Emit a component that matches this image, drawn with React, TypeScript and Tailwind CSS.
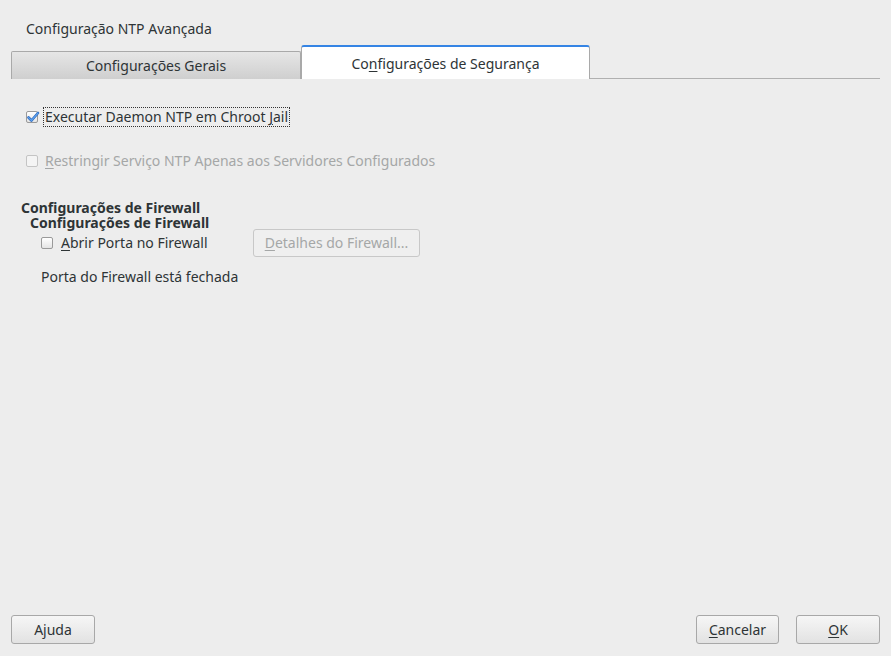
import React, { useState } from 'react';

function Check({ checked, disabled }: { checked?: boolean; disabled?: boolean }) {
  return (
    <span
      className={`relative inline-block w-[12px] h-[12px] shrink-0 rounded-[2px] border ${
        disabled ? 'border-[#c4c4c4] bg-[#f4f4f4]' : 'border-[#9a9a9a] bg-gradient-to-b from-[#ffffff] to-[#e4e4e4]'
      }`}
    >
      {checked && (
        <svg className="absolute left-[-1px] top-[-2px]" width="14" height="14" viewBox="0 0 14 14">
          <path d="M2.5 7.5 L5.5 10.5 L12 3" fill="none" stroke="#2a64b8" strokeWidth="2.6" strokeLinecap="round" strokeLinejoin="round" />
          <path d="M2.5 7.5 L5.5 10.5 L12 3" fill="none" stroke="#5aa0ee" strokeWidth="1.2" strokeLinecap="round" strokeLinejoin="round" />
        </svg>
      )}
    </span>
  );
}

function Btn({ children, className = '' }: { children: React.ReactNode; className?: string }) {
  return (
    <button className={`h-[29px] rounded-[3px] border border-[#a8a8a8] bg-gradient-to-b from-[#f6f6f6] to-[#e2e2e2] text-[14px] text-[#2e3436] ${className}`}>
      {children}
    </button>
  );
}

export default function App() {
  const [tab] = useState<'gerais' | 'seguranca'>('seguranca');

  return (
    <div className="w-[891px] h-[656px] bg-[#ededed] flex flex-col text-[14px] leading-[18px] text-[#2e3436]" style={{ fontFamily: '"Noto Sans", "Open Sans", sans-serif' }}>
      <div className="pl-[26px] pt-[20px] h-[45px]">Configuração NTP Avançada</div>

      <div className="flex items-end pl-[11px] pr-[11px]">
        <div className={`w-[290px] h-[28px] flex items-center justify-center border border-[#a9a9a9] border-b-0 rounded-t-[2px] bg-gradient-to-b from-[#e6e6e6] to-[#cfcfcf] ${tab === 'gerais' ? 'bg-white' : ''}`}>
          Configurações Gerais
        </div>
        <div className="w-[289px] h-[34px] flex items-center justify-center bg-white border-x border-[#a9a9a9] border-t-2 border-t-[#3584e4] rounded-t-[3px] pt-[2px]">
          <span>
            Co<span className="underline underline-offset-2">n</span>figurações de Segurança
          </span>
        </div>
        <div className="flex-1 border-b border-[#b0b0b0] border-l h-[1px]"></div>
      </div>

      <div className="flex flex-col pl-[26px] pt-[27px]">
        <div className="flex items-center gap-[6px] h-[21px]">
          <Check checked />
          <span className="border border-dotted border-[#333] px-[1px] leading-[18px] -ml-[1px]">
            Executar Daemon NTP em Chroot <span className="underline underline-offset-2">J</span>ail
          </span>
        </div>
        <div className="flex items-center gap-[7px] h-[21px] mt-[23px] text-[#a5a7a7]">
          <Check disabled />
          <span>
            <span className="underline underline-offset-2">R</span>estringir Serviço NTP Apenas aos Servidores Configurados
          </span>
        </div>
      </div>

      <div className="flex flex-col pl-[21px] pt-[29px]">
        <div className="font-bold leading-[15px]">Configurações de Firewall</div>
        <div className="font-bold leading-[15px] pl-[9px]">Configurações de Firewall</div>
        <div className="flex items-center pl-[20px] -mt-[1px]">
          <div className="flex items-center gap-[8px] w-[212px]">
            <Check />
            <span>
              <span className="underline underline-offset-2">A</span>brir Porta no Firewall
            </span>
          </div>
          <div className="w-[167px] h-[28px] rounded-[3px] border border-[#c8c8c8] bg-[#efefef] text-[#a5a7a7] flex items-center justify-center">
            <span>
              <span className="underline underline-offset-2">D</span>etalhes do Firewall...
            </span>
          </div>
        </div>
        <div className="pl-[20px] mt-[11px]">Porta do Firewall está fechada</div>
      </div>

      <div className="flex-1" />

      <div className="flex items-center px-[11px] pb-[12px]">
        <Btn className="w-[84px]">Ajuda</Btn>
        <div className="flex-1" />
        <Btn className="w-[83px]">
          <span className="underline underline-offset-2">C</span>ancelar
        </Btn>
        <Btn className="w-[84px] ml-[17px]">
          <span className="underline underline-offset-2">O</span>K
        </Btn>
      </div>
    </div>
  );
}
